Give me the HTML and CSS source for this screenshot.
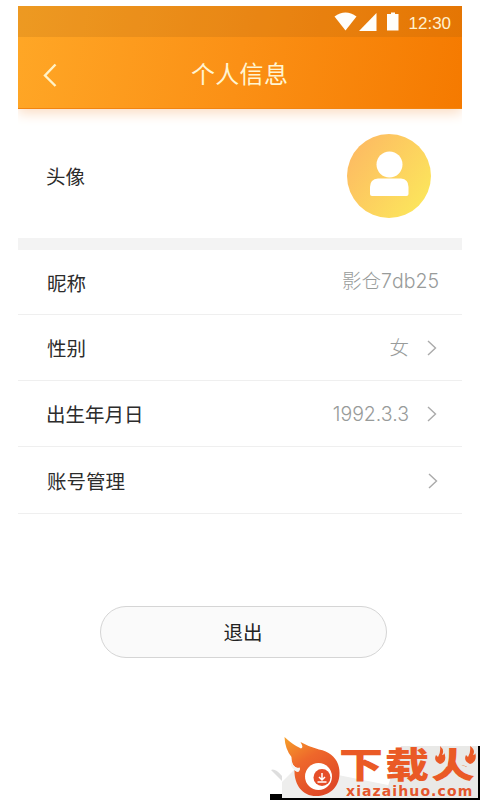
FILE: index.html
```html
<!DOCTYPE html>
<html lang="zh-CN">
<head>
<meta charset="utf-8">
<title>个人信息</title>
<link rel="stylesheet" href="styles.css">
</head>
<body>
<main class="screen">
  <header class="header">
    <div class="status">
      <svg class="signals" width="67" height="20" viewBox="0 0 67 20" fill="#fffefa">
        <path d="M0.5 4.5Q11.500-3.500 22.500 4.500L11.500 18.500Z"/>
        <path d="M42.500 1V19H25Z"/>
        <path d="M53 2H57V0.500H61V2H64.500V18.500H53Z"/>
      </svg>
      <span class="time">12:30</span>
    </div>
    <div class="nav">
      <svg class="back" width="15" height="25" viewBox="0 0 15 25"><path d="M12.500 1.500L2 12.500L12.500 23"/></svg>
      <h1>个人信息</h1>
    </div>
  </header>
  <section class="avatar-row">
    <span class="label">头像</span>
    <svg class="avatar" width="84" height="84" viewBox="0 0 84 84">
      <defs><linearGradient id="gold" x1="0.1" y1="0.2" x2="0.9" y2="0.8"><stop offset="0" stop-color="#fdbd62"/><stop offset="1" stop-color="#fce45c"/></linearGradient></defs>
      <circle cx="42" cy="42" r="42" fill="url(#gold)"/>
      <circle cx="42.500" cy="30.500" r="13" fill="#fff"/>
      <path d="M31 44.500H54Q61.500 45 61.500 53V60Q61.500 62 59.500 62H25Q23 62 23 60V53Q23 45 31 44.500Z" fill="#fff"/>
    </svg>
  </section>
  <section class="list">
    <div class="row"><span class="label">昵称</span><span class="value name">影仓7db25</span></div>
    <div class="row"><span class="label">性别</span><span class="value">女</span><svg class="chevron" width="10" height="16" viewBox="0 0 10 16"><path d="M1 1L8.500 8L1 15"/></svg></div>
    <div class="row birth"><span class="label">出生年月日</span><span class="value">1992.3.3</span><svg class="chevron" width="10" height="16" viewBox="0 0 10 16"><path d="M1 1L8.500 8L1 15"/></svg></div>
    <div class="row account"><span class="label">账号管理</span><svg class="chevron" width="10" height="16" viewBox="0 0 10 16"><path d="M1 1L8.500 8L1 15"/></svg></div>
  </section>
  <button class="logout">退出</button>
</main>
<aside class="watermark">
  <svg class="plate" width="212" height="64" viewBox="0 0 212 64">
    <defs><linearGradient id="fire" x1="0" y1="0" x2="0.6" y2="1"><stop offset="0" stop-color="#f6a02b"/><stop offset="0.45" stop-color="#ee672b"/><stop offset="1" stop-color="#df4927"/></linearGradient></defs>
    <path d="M2 58H14V62H210V10H212V64H2Z" fill="#000"/>
    <path d="M14 50H120L133 10H210V62H14Z" fill="#e9e9e7"/>
    <path d="M14 46L36 24L60 37L120 49V62H14Z" fill="#eeeeed"/>
    <path d="M3 34Q7 32 14 40V45Z" fill="#dedede"/>
    <path d="M16.500 1Q25 9 33 12.500Q36 12 32.500 6Q41 11 51 13.500C65 16 72 26 71.500 38C71 52 61 60 48 60C34 60 26 48 26.500 34Q29 37 32 33Q23 31 23.500 21Q17 13 16.500 1Z" fill="url(#fire)"/>
    <path d="M23.500 21C22 29 28 33 32 31.500C32 37 29 37 26.500 34Q21 30 23.500 21Z" fill="#f4f4f3"/>
    <circle cx="50.500" cy="40.500" r="13.500" fill="#fff"/>
    <circle cx="54" cy="41.500" r="8.500" fill="#e54e29"/>
    <path d="M54 37V43.500M51 41L54 44L57 41M49.500 46H58.500" fill="none" stroke="#fff" stroke-width="1.500"/>
  </svg>
  <div class="brand"><span>下</span><span>载</span><span class="huo">火</span></div>
  <div class="site">xiazaihuo.com</div>
  <svg class="flames" width="42" height="20" viewBox="0 0 42 20" fill="#ea5a26">
    <path d="M5 0Q10 4 7 9Q10 9 9 6Q13 16 5 18Q-2 15 1 9L3 11Q6 6 5 0Z"/>
    <path d="M35 0Q41 4 38 9Q41 9 40 6Q43 16 35 18Q28 15 31 9L33 11Q36 6 35 0Z"/>
  </svg>
</aside>
</body>
</html>
```
FILE: styles.css
```css
* { box-sizing: border-box; }
body {
  margin: 0;
  width: 480px;
  height: 800px;
  overflow: hidden;
  position: relative;
  background: #fff;
  font-family: "Noto Sans CJK SC", sans-serif;
}
.screen { width: 444px; margin: 6px 0 0 18px; }
.header {
  height: 103px;
  background: linear-gradient(100deg, #ffa726, #fb9015 50%, #f57a00);
  border-bottom: 1px solid #f28410;
  box-shadow: 0 4px 12px 0 #fbdcc2;
  clip-path: inset(0 0 -20px 0);
}
.status {
  height: 31px;
  display: flex;
  padding: 6px 10px 0 0;
  justify-content: flex-end;
  background: rgba(150, 90, 20, .17);
}
.time {
  width: 45px;
  margin-left: 6px;
  font: 17px/24px "Liberation Sans", sans-serif;
  color: #fff2d0;
  transform: translateX(1.500px);
}
.nav { height: 72px; display: flex; align-items: center; padding-left: 25px; }
.back { fill: none; stroke: #fff3c8; stroke-width: 2.4; margin-top: 5px; }
h1 {
  margin: 0 0 0 133px;
  font-size: 24px;
  line-height: 36px;
  font-weight: 400;
  letter-spacing: .3px;
  color: #fff5d2;
}
.avatar-row {
  height: 128.500px;
  padding: 5px 31px 0 28px;
  display: flex;
  align-items: center;
  justify-content: space-between;
}
.label { font-size: 19.5px; line-height: 30px; color: #2c2c2c; }
.list { border-top: 12px solid #f3f3f3; }
.row {
  height: 66.4px;
  display: flex;
  align-items: center;
  padding: 2px 25px 0 29px;
  border-bottom: 1.500px solid #efefef;
}
.row:first-child { height: 65px; padding-right: 23px; }
.birth { padding: 0 25px 0 28px; }
.account { padding-right: 24px; }
.value {
  margin-left: auto;
  font: 300 19.5px/28px Inter, "Noto Sans CJK SC", sans-serif;
  color: #989b9a;
}
.name { transform: translateY(-2px); }
.chevron { margin-left: 18px; fill: none; stroke: #aaa; stroke-width: 1.400; }
.account .chevron { margin-left: auto; }
.logout {
  display: block;
  width: 287px;
  height: 52px;
  margin: 92.500px 0 0 81.500px;
  padding: 0;
  border: 1.500px solid #d5d5d5;
  border-radius: 26px;
  background: #fafafa;
  font: 19.5px/30px "Noto Sans CJK SC", sans-serif;
  color: #222;
}
.watermark { position: absolute; left: 268px; top: 736px; width: 212px; height: 64px; }
.plate { display: block; }
.brand {
  position: absolute;
  left: 71px;
  top: 10px;
  display: flex;
  font-size: 44px;
  line-height: 42px;
  font-weight: 900;
  color: #ea5a26;
  transform: scaleY(.8);
  transform-origin: 0 0;
}
.brand span { width: 46px; }
.brand .huo { clip-path: polygon(36% -10%, 62% -10%, 62% 55%, 110% 72%, 110% 120%, -5% 120%, -5% 72%, 36% 60%); }
.site {
  position: absolute;
  left: 78px;
  top: 48px;
  font: bold 14px/14px "DejaVu Sans", sans-serif;
  letter-spacing: 1.100px;
  color: #e4562c;
}
.flames { position: absolute; left: 167px; top: 10px; }
```
